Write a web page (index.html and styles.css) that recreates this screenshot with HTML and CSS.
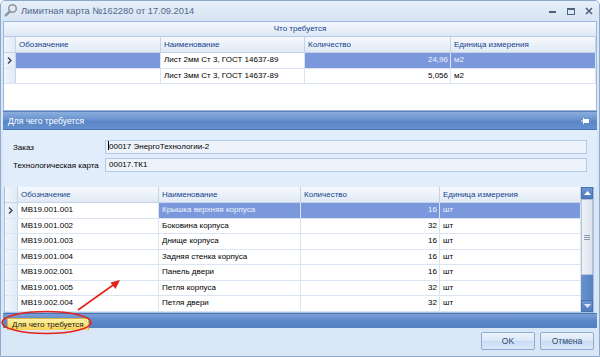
FILE: index.html
```html
<!DOCTYPE html>
<html lang="ru">
<head>
  <meta charset="UTF-8"/>
  <title>Лимитная карта №162280 от 17.09.2014</title>
  <link rel="stylesheet" href="styles.css">
</head>
<body>
<div class="window">

  <div class="titlebar">
    <svg class="app-icon" width="14" height="14" viewBox="0 0 14 14">
      <circle cx="8.5" cy="5.5" r="3.8" fill="#e3e8ee" stroke="#8c97a4" stroke-width="1.6"/>
      <line x1="5.8" y1="8.3" x2="1.8" y2="12.3" stroke="#8c97a4" stroke-width="2.4" stroke-linecap="round"/>
    </svg>
    <span class="title">Лимитная карта №162280 от 17.09.2014</span>
    <div class="controls">
      <svg width="10" height="10" viewBox="0 0 10 10"><rect x="1" y="5" width="7" height="2" fill="#4e6180"/></svg>
      <svg width="10" height="10" viewBox="0 0 10 10"><rect x="1.5" y="2.5" width="7" height="6" fill="none" stroke="#4e6180"/><rect x="1" y="2" width="8" height="2" fill="#4e6180"/></svg>
      <svg width="10" height="10" viewBox="0 0 10 10"><path d="M2 2 L8 8 M8 2 L2 8" stroke="#4e6180" stroke-width="1.6"/></svg>
    </div>
  </div>

  <div class="client">

    <div class="need">
      <div class="band">Что требуется</div>
      <div class="grid top-grid">
        <div class="row head">
          <div class="ind"></div><div>Обозначение</div><div>Наименование</div><div>Количество</div><div>Единица измерения</div>
        </div>
        <div class="row sel">
          <div class="ind"><svg width="6" height="7" viewBox="0 0 6 7"><path d="M1 0.5 L4 3.5 L1 6.5" fill="none" stroke="#2b3d57" stroke-width="1.3"/></svg></div>
          <div class="hl"></div><div class="focus">Лист 2мм Ст 3, ГОСТ 14637-89</div><div class="hl num">24,96</div><div class="hl">м2</div>
        </div>
        <div class="row">
          <div class="ind"></div><div></div><div>Лист 3мм Ст 3, ГОСТ 14637-89</div><div class="num">5,056</div><div>м2</div>
        </div>
      </div>
    </div>

    <div class="purpose">
      <div class="panel-head">
        <span>Для чего требуется</span>
        <svg class="pin" width="9" height="6" viewBox="0 0 9 6"><rect x="3" y="1" width="5" height="4" fill="#fff"/><rect x="2" y="0" width="1" height="6" fill="#fff"/><rect x="0" y="2.5" width="2" height="1" fill="#fff"/></svg>
      </div>
      <div class="panel-body">
        <div class="field">
          <label>Заказ</label>
          <div class="input"><span class="caret"></span>00017 ЭнергоТехнологии-2</div>
        </div>
        <div class="field">
          <label>Технологическая карта</label>
          <div class="input">00017.ТК1</div>
        </div>
      </div>

      <div class="grid-wrap">
        <div class="grid bottom-grid">
          <div class="row head">
            <div class="ind"></div><div>Обозначение</div><div>Наименование</div><div>Количество</div><div>Единица измерения</div>
          </div>
          <div class="row sel">
            <div class="ind"><svg width="6" height="7" viewBox="0 0 6 7"><path d="M1 0.5 L4 3.5 L1 6.5" fill="none" stroke="#2b3d57" stroke-width="1.3"/></svg></div>
            <div class="focus">МВ19.001.001</div><div class="hl">Крышка верхняя корпуса</div><div class="hl num">16</div><div class="hl">шт</div>
          </div>
          <div class="row"><div class="ind"></div><div>МВ19.001.002</div><div>Боковина корпуса</div><div class="num">32</div><div>шт</div></div>
          <div class="row"><div class="ind"></div><div>МВ19.001.003</div><div>Днище корпуса</div><div class="num">16</div><div>шт</div></div>
          <div class="row"><div class="ind"></div><div>МВ19.001.004</div><div>Задняя стенка корпуса</div><div class="num">16</div><div>шт</div></div>
          <div class="row"><div class="ind"></div><div>МВ19.002.001</div><div>Панель двери</div><div class="num">16</div><div>шт</div></div>
          <div class="row"><div class="ind"></div><div>МВ19.001.005</div><div>Петля корпуса</div><div class="num">32</div><div>шт</div></div>
          <div class="row"><div class="ind"></div><div>МВ19.002.004</div><div>Петля двери</div><div class="num">32</div><div>шт</div></div>
        </div>
        <div class="scrollbar">
          <div class="sb-btn"><svg width="7" height="4" viewBox="0 0 7 4"><path d="M0 4 L3.5 0 L7 4Z" fill="#fff"/></svg></div>
          <div class="sb-thumb"><span></span><span></span><span></span></div>
          <div class="sb-track"></div>
          <div class="sb-btn"><svg width="7" height="4" viewBox="0 0 7 4"><path d="M0 0 L3.5 4 L7 0Z" fill="#dfe8f5"/></svg></div>
        </div>
      </div>
    </div>

    <div class="tabs">
      <span class="tab">Для чего требуется</span>
    </div>

    <div class="footer">
      <button>OK</button>
      <button>Отмена</button>
    </div>
  </div>

  <!-- пометка поверх окна -->
  <svg class="note" width="600" height="357" viewBox="0 0 600 357">
    <ellipse cx="46.5" cy="322.5" rx="44.5" ry="11" fill="none" stroke="#e3231b" stroke-width="1.6"/>
    <line x1="78" y1="310" x2="116" y2="283" stroke="#e3231b" stroke-width="1.6"/>
    <path d="M120 280 L110.5 282.5 L115.5 289Z" fill="#e3231b"/>
  </svg>
</div>
</body>
</html>
```

FILE: styles.css
```css
*{box-sizing:border-box;margin:0;padding:0}
body{width:600px;height:357px;overflow:hidden;background:#fff;font-family:'Liberation Sans',Arial,sans-serif;font-size:8px;color:#000}

.window{position:relative;width:600px;height:357px;display:flex;flex-direction:column;background:#d9e6f5;border:1px solid #8fa9cd;border-radius:5px 5px 0 0;overflow:hidden}

.titlebar{height:20px;flex:none;display:flex;align-items:center;padding:0 5px 0 3px;background:linear-gradient(#e6eff9,#d7e4f3)}
.app-icon{margin-top:-2px}
.title{margin-left:3px;font-size:9.3px;color:#52678a}
.controls{margin-left:auto;display:flex;gap:8px;align-items:center}

.client{flex:1;display:flex;flex-direction:column;padding:0 2px}

.need{height:90px;flex:none;background:#fff;border:1px solid #9cb8de;display:flex;flex-direction:column}
.band{height:15px;flex:none;line-height:14px;text-align:center;color:#15428b;background:linear-gradient(#f4f8fd,#dde8f6);border-bottom:1px solid #b5cae6}

.grid{display:flex;flex-direction:column}
.row{display:grid;height:15.5px;line-height:14.5px;border-bottom:1px solid #dbe5f1}
.row>div{border-right:1px solid #dbe5f1;padding:0 3px;white-space:nowrap;overflow:hidden}
.row .ind{padding:0;background:linear-gradient(90deg,#f1f5fb,#e1eaf6);border-right:1px solid #c5d5ea;display:flex;align-items:center;justify-content:center}
.row.head{height:16px;line-height:15px;border-bottom:1px solid #c2d3ea;background:linear-gradient(#f7f9fd,#dfe9f5);color:#15428b}
.row.head>div{border-right:1px solid #c2d3ea}
.row .num{text-align:right;padding-right:2px}
.row .hl{background:#7b98dd;color:#eef3fc}
.row .focus{background:#fff}

.top-grid .row{grid-template-columns:12px 145px 144px 146px 1fr}
.bottom-grid{flex:1}
.bottom-grid .row{grid-template-columns:13px 141px 142px 139px 1fr}

.purpose{flex:none;display:flex;flex-direction:column}
.panel-head{height:19px;display:flex;align-items:center;justify-content:space-between;padding:0 7px 0 5px;color:#fff;font-size:8.5px;background:linear-gradient(#8aaddd,#6a93cf 45%,#5a86c7 55%,#6590cd);border-top:1px solid #5b80b8;border-bottom:1px solid #4d75b1}
.panel-body{height:57px;background:#e2edfb;padding:10px 10px 0 10px;display:flex;flex-direction:column;gap:4px}
.field{display:flex;align-items:center}
.field label{width:92px;flex:none}
.input{flex:1;height:14px;line-height:12px;padding-left:3px;background:#eef3fb;border:1px solid #b6c9e5;position:relative}
.caret{display:inline-block;width:1px;height:9px;background:#000;vertical-align:-1px;margin-left:-1px}

.grid-wrap{height:126px;display:flex;margin:0 3px 0 1px;background:#fff;border:1px solid #a6bfe2;border-top:none}
.scrollbar{width:12px;flex:none;display:flex;flex-direction:column;background:#5f89c8}
.sb-btn{height:12px;flex:none;display:flex;align-items:center;justify-content:center;background:linear-gradient(#6d95d0,#4f7bbd);border:1px solid #4872b3}
.sb-thumb{height:76px;flex:none;display:flex;flex-direction:column;align-items:center;justify-content:center;gap:1px;background:linear-gradient(90deg,#eef2f8,#dde4ee);border:1px solid #b4c3d8}
.sb-thumb span{width:6px;height:1px;background:#8b9bb2}
.sb-track{flex:1;background:linear-gradient(90deg,#6a92cd,#5581c3)}

.tabs{height:15px;flex:none;display:flex;align-items:flex-end;padding-left:4px;background:linear-gradient(#7aa0d6,#5b86c7 50%,#5080c3);border-top:1px solid #4c74b0}
.tab{height:12px;line-height:11px;margin-bottom:-2px;padding:0 4px;color:#222;background:linear-gradient(#fff2a8,#fadf74 55%,#f6d25a);border:1px solid #d7b24a;border-bottom:none}

.footer{flex:1;display:flex;justify-content:flex-end;align-items:flex-start;gap:5px;padding:4px 3px 0 0}
.footer button{width:54px;height:18px;font-family:'Liberation Sans',Arial,sans-serif;font-size:8.5px;color:#2d4a72;background:linear-gradient(#eef4fc,#d8e6f7 50%,#c9dbf3 51%,#dbe8f8);border:1px solid #8eabd6;border-radius:2px}

.note{position:absolute;left:-1px;top:-1px;pointer-events:none}
```
